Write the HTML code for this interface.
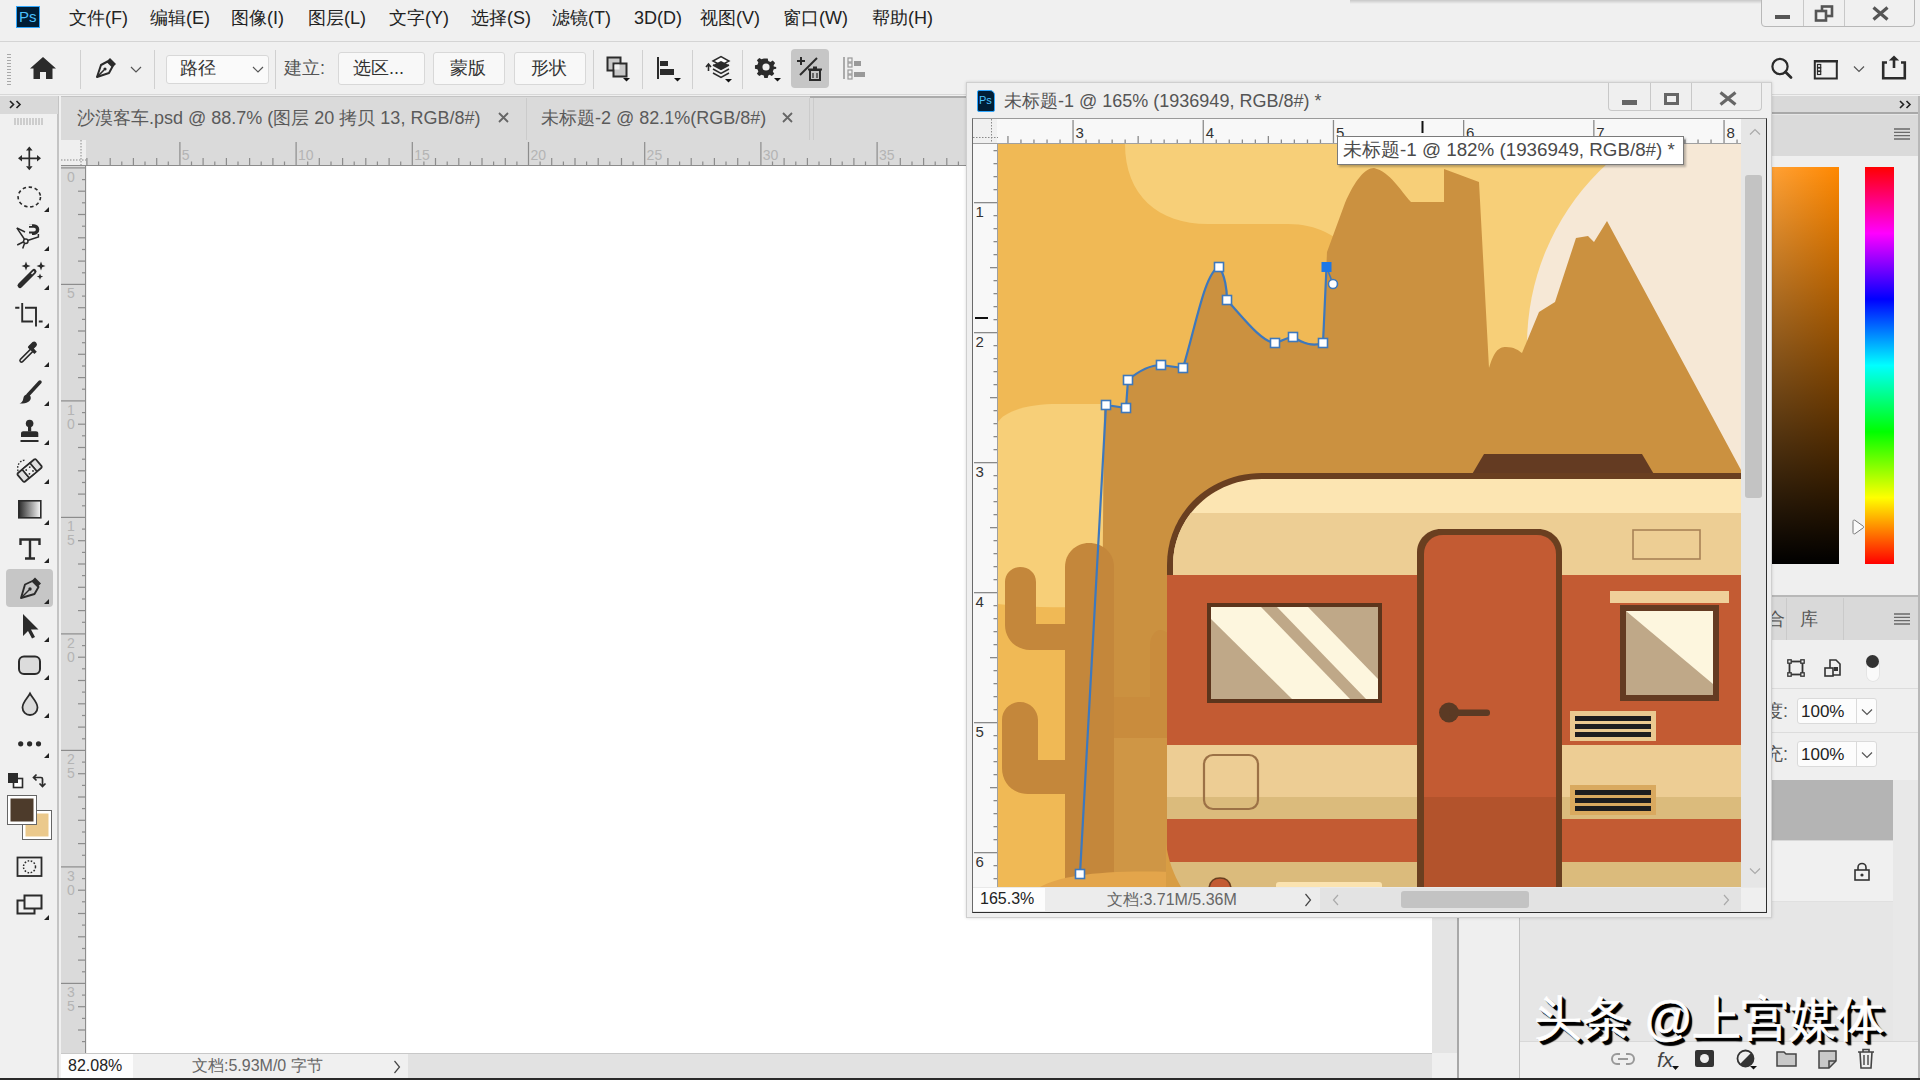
<!DOCTYPE html>
<html><head><meta charset="utf-8">
<style>
*{box-sizing:border-box;margin:0;padding:0}
html,body{width:1920px;height:1080px;overflow:hidden;background:#f0f0f0;font-family:"Liberation Sans",sans-serif;color:#222}
.a{position:absolute}
.t{position:absolute;white-space:nowrap;line-height:1}
svg{position:absolute;overflow:visible}
</style></head><body>
<!-- MENU BAR -->
<div class="a" style="left:0;top:0;width:1920px;height:42px;background:#f0f0f0;border-bottom:1px solid #d4d4d4"></div>
<div class="a" style="left:16px;top:6px;width:24px;height:22px;background:#001e36;border:1px solid #31a8ff"></div>
<div class="t" style="left:19px;top:9px;font-size:15px;color:#4cc2ff">Ps</div>
<div id="menu" class="t" style="left:69px;top:9px;font-size:18px;color:#222">
<span class="t" style="left:0">文件(F)</span><span class="t" style="left:81px">编辑(E)</span><span class="t" style="left:162px">图像(I)</span><span class="t" style="left:239px">图层(L)</span><span class="t" style="left:320px">文字(Y)</span><span class="t" style="left:402px">选择(S)</span><span class="t" style="left:483px">滤镜(T)</span><span class="t" style="left:565px">3D(D)</span><span class="t" style="left:631px">视图(V)</span><span class="t" style="left:714px">窗口(W)</span><span class="t" style="left:803px">帮助(H)</span>
</div>
<div class="a" style="left:1350px;top:0;width:412px;height:4px;background:linear-gradient(#c8c8c8,#f0f0f0)"></div>
<!-- window controls -->
<div class="a" style="left:1761px;top:-2px;width:154px;height:29px;border:1px solid #b8b8b8;border-radius:0 0 4px 4px;background:#f0f0f0"></div>
<div class="a" style="left:1803px;top:0;width:1px;height:26px;background:#c8c8c8"></div>
<div class="a" style="left:1844px;top:0;width:1px;height:26px;background:#c8c8c8"></div>
<div class="a" style="left:1775px;top:15px;width:15px;height:4px;background:#555"></div>
<svg style="left:1814px;top:5px" width="20" height="17"><rect x="8" y="1.5" width="10" height="9.5" fill="none" stroke="#555" stroke-width="2.6"/><rect x="2" y="6" width="10" height="9.5" fill="#f0f0f0" stroke="#555" stroke-width="2.6"/></svg>
<svg style="left:1872px;top:6px" width="18" height="16"><path d="M1.5 1.5l14 12M15.5 1.5l-14 12" stroke="#555" stroke-width="3.2"/></svg>

<!-- OPTIONS BAR -->
<div class="a" style="left:0;top:42px;width:1920px;height:53px;background:#f0f0f0;border-bottom:1px solid #d8d8d8"></div>

<!-- grip -->
<svg style="left:7px;top:54px" width="5" height="31"><path d="M0 .5h4M0 3.5h4M0 6.5h4M0 9.5h4M0 12.5h4M0 15.5h4M0 18.5h4M0 21.5h4M0 24.5h4M0 27.5h4M0 30.5h4" stroke="#a8a8a8" stroke-width="1"/></svg>
<!-- home -->
<svg style="left:30px;top:57px" width="26" height="23"><path d="M13 0L0 11.5h3.5V22h6.5v-7h6v7h6.5V11.5H26z" fill="#2b2b2b"/></svg>
<div class="a" style="left:80px;top:50px;width:1px;height:39px;background:#d0d0d0"></div>
<!-- pen -->
<svg style="left:94px;top:56px" width="24" height="24"><path d="M16 2l6 6-3 3-6-6z" fill="#2b2b2b"/><path d="M13.5 5.5L18.5 10.5 15 17 3 21 7 9z" fill="none" stroke="#2b2b2b" stroke-width="2" stroke-linejoin="round"/><path d="M3 21L10 14" stroke="#2b2b2b" stroke-width="1.6"/><circle cx="11" cy="13" r="1.6" fill="#2b2b2b"/></svg>
<svg style="left:130px;top:66px" width="12" height="8"><path d="M1 1l5 5 5-5" fill="none" stroke="#555" stroke-width="1.2"/></svg>
<div class="a" style="left:154px;top:50px;width:1px;height:39px;background:#d0d0d0"></div>
<!-- dropdown 路径 -->
<div class="a" style="left:166px;top:55px;width:103px;height:29px;background:#fafafa;border:1px solid #d8d8d8;border-radius:3px"></div>
<div class="t" style="left:180px;top:59px;font-size:18px;color:#333">路径</div>
<svg style="left:252px;top:66px" width="12" height="8"><path d="M1 1l5 5 5-5" fill="none" stroke="#555" stroke-width="1.2"/></svg>
<div class="a" style="left:275px;top:50px;width:1px;height:39px;background:#d0d0d0"></div>
<div class="t" style="left:284px;top:59px;font-size:18px;color:#555">建立:</div>
<div class="a" style="left:338px;top:52px;width:87px;height:33px;background:#f8f8f8;border:1px solid #d8d8d8;border-radius:3px"></div>
<div class="t" style="left:353px;top:59px;font-size:18px;color:#333">选区...</div>
<div class="a" style="left:433px;top:52px;width:72px;height:33px;background:#f8f8f8;border:1px solid #d8d8d8;border-radius:3px"></div>
<div class="t" style="left:450px;top:59px;font-size:18px;color:#333">蒙版</div>
<div class="a" style="left:514px;top:52px;width:72px;height:33px;background:#f8f8f8;border:1px solid #d8d8d8;border-radius:3px"></div>
<div class="t" style="left:531px;top:59px;font-size:18px;color:#333">形状</div>
<div class="a" style="left:593px;top:50px;width:1px;height:39px;background:#d0d0d0"></div>
<!-- combine icon -->
<svg style="left:606px;top:56px" width="28" height="28"><rect x="1.5" y="1.5" width="13" height="13" fill="#c8c8c8" stroke="#2b2b2b" stroke-width="2"/><rect x="7.5" y="7.5" width="13" height="13" fill="#c8c8c8" stroke="#2b2b2b" stroke-width="2"/><rect x="8.5" y="8.5" width="5" height="5" fill="#f0f0f0"/><path d="M17 22h7l-3.5 3.5z" fill="#111"/></svg>
<div class="a" style="left:642px;top:50px;width:1px;height:39px;background:#d0d0d0"></div>
<svg style="left:657px;top:56px" width="28" height="28"><rect x="0" y="1" width="2" height="22" fill="#2b2b2b"/><rect x="3" y="5" width="8" height="5" fill="#2b2b2b"/><rect x="3" y="13" width="14" height="6" fill="#2b2b2b"/><path d="M17 22h7l-3.5 3.5z" fill="#111"/></svg>
<div class="a" style="left:692px;top:50px;width:1px;height:39px;background:#d0d0d0"></div>
<svg style="left:703px;top:55px" width="30" height="30"><path d="M3 12l2.5-3 2.5 3M5.5 9v7" fill="none" stroke="#2b2b2b" stroke-width="1.6"/><path d="M10 6l8-4.5 8 4.5-8 4.5z" fill="#fff" stroke="#2b2b2b" stroke-width="1.5"/><path d="M10 10l8 4.5 8-4.5" fill="none" stroke="#2b2b2b" stroke-width="1.5"/><path d="M10 10l8-4 8 4-8 4.5z" fill="#2b2b2b"/><path d="M10 14l8 4.5 8-4.5M10 18l8 4.5 8-4.5" fill="none" stroke="#2b2b2b" stroke-width="1.5"/><path d="M22 24h7l-3.5 3.5z" fill="#111"/></svg>
<div class="a" style="left:742px;top:50px;width:1px;height:39px;background:#d0d0d0"></div>
<svg style="left:755px;top:56px" width="30" height="28"><g transform="translate(11,11)"><path d="M-2-10h4l.7 3 2.6 1.1 2.6-1.7 2.8 2.8-1.7 2.6L9.1-.7 12 0v0 2l-2.9.7-1.1 2.6 1.7 2.6-2.8 2.8-2.6-1.7L2.7 10.1 2 13h-4l-.7-2.9-2.6-1.1-2.6 1.7-2.8-2.8 1.7-2.6L-10.1 2.7-13 2v-4l2.9-.7 1.1-2.6-1.7-2.6 2.8-2.8 2.6 1.7 2.6-1.1z" fill="#2b2b2b" transform="scale(.85)"/><circle r="3.6" fill="#f0f0f0"/></g><path d="M19 22h7l-3.5 3.5z" fill="#111"/></svg>
<div class="a" style="left:791px;top:49px;width:38px;height:39px;background:#c6c6c6;border-radius:4px"></div>
<svg style="left:795px;top:55px" width="30" height="28"><path d="M6 2v8M2 6h8" stroke="#2b2b2b" stroke-width="2"/><path d="M22 3L5 20" stroke="#2b2b2b" stroke-width="2"/><rect x="15" y="15" width="10" height="10" fill="none" stroke="#2b2b2b" stroke-width="2"/><path d="M13 14.5h14M18 12.5h4" stroke="#2b2b2b" stroke-width="2"/><path d="M18 18v5M22 18v5" stroke="#2b2b2b" stroke-width="1.2"/></svg>
<svg style="left:843px;top:56px" width="26" height="28"><path d="M1 1v22" stroke="#999" stroke-width="1.6"/><rect x="5" y="2" width="4" height="4" fill="none" stroke="#999" stroke-width="1.2"/><rect x="5" y="7" width="4" height="4" fill="none" stroke="#999" stroke-width="1.2"/><rect x="5" y="14" width="4" height="4" fill="none" stroke="#999" stroke-width="1.2"/><rect x="5" y="19" width="4" height="4" fill="none" stroke="#999" stroke-width="1.2"/><rect x="11" y="5" width="7" height="5" fill="#999"/><rect x="11" y="16" width="11" height="5" fill="#999"/></svg>
<!-- right side icons -->
<svg style="left:1768px;top:55px" width="26" height="26"><circle cx="12" cy="11.5" r="7.6" fill="none" stroke="#2b2b2b" stroke-width="2.2"/><path d="M17.5 17l5.5 5.5" stroke="#2b2b2b" stroke-width="2.8" stroke-linecap="round"/></svg>
<svg style="left:1813px;top:59px" width="26" height="22"><rect x="1.8" y="2" width="22" height="17.5" fill="none" stroke="#2b2b2b" stroke-width="2"/><rect x="1" y="1" width="24" height="2.5" fill="#2b2b2b"/><rect x="4.5" y="5.5" width="3.2" height="3" fill="none" stroke="#2b2b2b" stroke-width="1.2"/><rect x="4.5" y="9" width="3.2" height="3" fill="none" stroke="#2b2b2b" stroke-width="1.2"/><rect x="4.5" y="12.5" width="3.2" height="3" fill="none" stroke="#2b2b2b" stroke-width="1.2"/></svg>
<svg style="left:1853px;top:65px" width="12" height="8"><path d="M1 1.5l5 5 5-5" fill="none" stroke="#555" stroke-width="1.2"/></svg>
<svg style="left:1880px;top:54px" width="28" height="27"><path d="M7 8.5H3.2v15.8h21.6V8.5H21" fill="none" stroke="#2b2b2b" stroke-width="2.6"/><path d="M14 14V5" stroke="#2b2b2b" stroke-width="2.6"/><path d="M14 1.5l5.2 5H8.8z" fill="#2b2b2b"/></svg>

<!-- LEFT TOOLBAR -->
<div class="a" style="left:0;top:96px;width:59px;height:982px;background:#f0f0f0;border-right:2px solid #c4c4c4"></div>
<div class="a" style="left:0;top:96px;width:58px;height:18px;background:#d9d9d9"></div>
<svg style="left:9px;top:100px" width="14" height="9"><path d="M1 1l3.5 3.5L1 8M7.5 1L11 4.5 7.5 8" fill="none" stroke="#222" stroke-width="1.6"/></svg>
<svg style="left:14px;top:118px" width="32" height="8"><path d="M1 0v7M4 0v7M7 0v7M10 0v7M13 0v7M16 0v7M19 0v7M22 0v7M25 0v7M28 0v7" stroke="#aaa" stroke-width="1"/></svg>


<!-- TOOLS -->
<svg style="left:0;top:0" width="60" height="1080">
<g fill="#2b2b2b" stroke="none">
<!-- move -->
<g fill="none" stroke="#2b2b2b" stroke-width="1.7"><path d="M29.3 150v16.5M21 158.3h16.6"/></g>
<g fill="#2b2b2b"><path d="M29.3 146.5l3.3 4h-6.6zM29.3 170.3l3.3-4h-6.6zM18 158.3l4-3.3v6.6zM41 158.3l-4-3.3v6.6z"/></g>
<ellipse cx="29.3" cy="197" rx="11.2" ry="9.9" fill="none" stroke="#2b2b2b" stroke-width="1.6" stroke-dasharray="3.4 2.7"/>
<path d="M49 207v5h-5z" fill="#222"/>
<!-- lasso -->
<g fill="none" stroke="#2b2b2b" stroke-width="1.5">
<path d="M16.8 227.8L25 232M16.8 227.8L25 240"/>
<path d="M17.2 245l7-3.5M27.6 240.5l10.8-3.6v-3M24.5 243.5l-1.8 5"/>
<circle cx="25.8" cy="241.3" r="2.2" fill="#f0f0f0"/>
</g>
<path d="M29 226h5a3.6 3.6 0 0 1 0 7.2h-5" fill="none" stroke="#2b2b2b" stroke-width="3.4"/><path d="M29 224.3h3v1.6h-3zM29 233.4h3v1.6h-3z" fill="#f0f0f0"/>
<path d="M49 246v5h-5z" fill="#222"/>
<!-- wand -->
<path d="M20 285.5l14-14" stroke="#2b2b2b" stroke-width="5" stroke-linecap="round"/>
<path d="M31.5 274l2.5-2.5" stroke="#f0f0f0" stroke-width="1.5"/>
<path d="M26 261.5l1.2 3.3 3.3 1.2-3.3 1.2-1.2 3.3-1.2-3.3-3.3-1.2 3.3-1.2zM41 261.5l1.2 3.3 3.3 1.2-3.3 1.2-1.2 3.3-1.2-3.3-3.3-1.2 3.3-1.2zM40 273.5l.9 2.2 2.2.9-2.2.9-.9 2.2-.9-2.2-2.2-.9 2.2-.9z" fill="#2b2b2b"/>
<path d="M49 285v5h-5z" fill="#222"/>
<!-- crop -->
<path d="M22.2 303v18.5H33M36 326.6V307.8H25M15.2 307.8h4.2M38.8 321.5h3.8" fill="none" stroke="#2b2b2b" stroke-width="1.9"/>
<path d="M49 323v5h-5z" fill="#222"/>
<!-- eyedropper -->
<path d="M21.5 360.5l10.5-10.5" stroke="#2b2b2b" stroke-width="4.6" stroke-linecap="round"/>
<path d="M21.5 360.5l10.5-10.5" stroke="#f0f0f0" stroke-width="1.6" stroke-linecap="round"/>
<path d="M27.8 347.5l6.6 6.6 2.4-2.4-6.6-6.6z" fill="#2b2b2b"/>
<path d="M32 350.5l4.5-4.5a2.9 2.9 0 0 0-4-4L28 346.5z" fill="#2b2b2b"/>
<path d="M49 362v5h-5z" fill="#222"/>
<!-- brush -->
<path d="M28 395l12-13" stroke="#2b2b2b" stroke-width="3.5" stroke-linecap="round"/>
<path d="M19.5 403.5c1.5-.3 3.5-2 3.8-5 .3-2.5 2-4 4-4 2.2 0 3.5 1.5 3.5 3.4-.2 3.5-4 5.8-11.3 5.6z" fill="#2b2b2b"/>
<path d="M49 401v5h-5z" fill="#222"/>
<!-- stamp -->
<circle cx="29.6" cy="423.5" r="3.8" fill="#2b2b2b"/>
<path d="M28 426h3.2v5.5H28z" fill="#2b2b2b"/>
<path d="M21 437v-3.5c0-1.5 1-2.3 2.3-2.3h12.7c1.3 0 2.3.8 2.3 2.3V437z" fill="#2b2b2b"/>
<rect x="20.5" y="440" width="18" height="2" fill="#2b2b2b"/>
<path d="M49 440v5h-5z" fill="#222"/>
<!-- healing -->
<g transform="translate(29.6 470.5) rotate(-40)">
<rect x="-12" y="-5.5" width="24" height="11" rx="1.5" fill="#e0e0e0" stroke="#2b2b2b" stroke-width="1.8"/>
<path d="M-5 -5.5v11M5 -5.5v11" stroke="#2b2b2b" stroke-width="1.5"/>
<rect x="-5" y="-5.5" width="10" height="11" fill="#f0f0f0" stroke="#2b2b2b" stroke-width="1.5"/>
<circle cx="-2.3" cy="-2.5" r=".9" fill="#2b2b2b"/><circle cx="2.3" cy="-2.5" r=".9" fill="#2b2b2b"/><circle cx="-2.3" cy="2.5" r=".9" fill="#2b2b2b"/><circle cx="2.3" cy="2.5" r=".9" fill="#2b2b2b"/>
</g>
<path d="M18 471c-1-4 0-10 7-11" fill="none" stroke="#2b2b2b" stroke-width="1.4" stroke-dasharray="1.6 1.6"/>
<path d="M49 479v5h-5z" fill="#222"/>
<!-- gradient -->
<defs><linearGradient id="gr" x1="0" x2="1" y1="0" y2="0"><stop offset="0" stop-color="#2a2a2a"/><stop offset="1" stop-color="#fafafa"/></linearGradient></defs>
<rect x="18.8" y="500.8" width="22" height="17" fill="url(#gr)" stroke="#2b2b2b" stroke-width="1.6"/>
<path d="M49 520v5h-5z" fill="#222"/>
<!-- type -->
<path d="M20.5 545v-5.5h19v5.5M30 539.5v19M25 558.5h10" fill="none" stroke="#2b2b2b" stroke-width="2.4"/>
<path d="M49 558v5h-5z" fill="#222"/>
</svg>
<div class="a" style="left:6px;top:569px;width:47px;height:38px;background:#c6c6c6;border-radius:4px"></div>
<svg style="left:0;top:0" width="60" height="1080">
<!-- pen -->
<path d="M35 577.5l6 6-3 3-6-6z" fill="#2b2b2b"/>
<path d="M32.5 581L38.5 587 34.5 594 21 598 25 584.5z" fill="none" stroke="#2b2b2b" stroke-width="1.9" stroke-linejoin="round"/>
<path d="M21.5 597.5L29 590" stroke="#2b2b2b" stroke-width="1.5"/>
<circle cx="30" cy="589" r="1.7" fill="#2b2b2b"/>
<path d="M49 599v5h-5z" fill="#222"/>
<!-- path select -->
<path d="M23 614v22l5-5 4 7.5 3-1.5-4-7.5h7.5z" fill="#2b2b2b"/>
<path d="M49 637v5h-5z" fill="#222"/>
<!-- rounded rect -->
<rect x="19" y="656.5" width="21" height="17.5" rx="5" fill="#dcdcdc" stroke="#2b2b2b" stroke-width="2"/>
<path d="M49 675v5h-5z" fill="#222"/>
<!-- drop -->
<path d="M30 693.5c-2 4-7.5 8.5-7.5 14a7.5 7.5 0 0 0 15 0c0-5.5-5.5-10-7.5-14z" fill="#dcdcdc" stroke="#2b2b2b" stroke-width="1.8"/>
<path d="M49 713v5h-5z" fill="#222"/>
<!-- dots -->
<circle cx="20.7" cy="743.8" r="2.6" fill="#2b2b2b"/><circle cx="29.6" cy="743.8" r="2.6" fill="#2b2b2b"/><circle cx="38.5" cy="743.8" r="2.6" fill="#2b2b2b"/>
<path d="M49 753v5h-5z" fill="#222"/>
<!-- default colors -->
<rect x="13.5" y="778.5" width="9" height="9" fill="#fff" stroke="#2b2b2b" stroke-width="1.6"/>
<rect x="8" y="773" width="10" height="10" fill="#2b2b2b"/>
<path d="M36.5 774.5l-3 3 3 3M34 777.5h7c1 0 1.5.5 1.5 1.5V786M39.5 783.5l3 3 3-3" fill="none" stroke="#2b2b2b" stroke-width="1.7"/>
<!-- bg / fg swatches -->
<rect x="22.5" y="810.5" width="29" height="29" fill="#fff" stroke="#666" stroke-width="1"/>
<rect x="25.5" y="813.5" width="23" height="23" fill="#ebc98c"/>
<rect x="7.5" y="795.5" width="29" height="29" fill="#fff" stroke="#666" stroke-width="1"/>
<rect x="10.5" y="798.5" width="23" height="23" fill="#4d3b2b"/>
<!-- quick mask -->
<rect x="17.5" y="857.5" width="24" height="18.5" fill="none" stroke="#2b2b2b" stroke-width="1.8"/>
<circle cx="29.5" cy="866.8" r="6" fill="none" stroke="#2b2b2b" stroke-width="1.5" stroke-dasharray="1.6 1.6"/>
<!-- screen mode -->
<rect x="24.5" y="895.5" width="17" height="13" fill="none" stroke="#2b2b2b" stroke-width="2"/>
<path d="M24 900.5h-6.5v13h17v-4.5" fill="none" stroke="#2b2b2b" stroke-width="2"/>
<path d="M24.5 900.5v8h10" fill="none" stroke="#2b2b2b" stroke-width="1"/>
<path d="M49 915v5h-5z" fill="#222"/>
</svg>
<!-- DOC TABS -->
<div class="a" style="left:61px;top:96px;width:1400px;height:44px;background:#dadada;border-top:1px solid #c4c4c4"></div>
<div class="t" style="left:77px;top:109px;font-size:18px;color:#5a5a5a">沙漠客车.psd @ 88.7% (图层 20 拷贝 13, RGB/8#)</div>
<svg style="left:498px;top:112px" width="11" height="11"><path d="M1 1l9 9M10 1L1 10" stroke="#666" stroke-width="1.8"/></svg>
<div class="a" style="left:526px;top:98px;width:1px;height:42px;background:#cbcbcb"></div>
<div class="t" style="left:541px;top:109px;font-size:18px;color:#5a5a5a">未标题-2 @ 82.1%(RGB/8#)</div>
<svg style="left:782px;top:112px" width="11" height="11"><path d="M1 1l9 9M10 1L1 10" stroke="#666" stroke-width="1.8"/></svg>
<div class="a" style="left:809px;top:98px;width:1px;height:42px;background:#cbcbcb"></div>
<div class="a" style="left:813px;top:98px;width:1px;height:42px;background:#cbcbcb"></div>
<div class="a" style="left:810px;top:96px;width:660px;height:2px;background:#ababab"></div>

<!-- RULERS main -->
<div class="a" style="left:61px;top:140px;width:1400px;height:26px;background:#dadada;border-bottom:1px solid #8c8c8c"></div>
<svg style="left:64px;top:140px" width="1000" height="26"><g fill="#8c8c8c"><rect x="22.3" y="18" width="1.2" height="7"/><rect x="34.0" y="21.5" width="1.2" height="3.5"/><rect x="45.6" y="18" width="1.2" height="7"/><rect x="57.2" y="21.5" width="1.2" height="3.5"/><rect x="68.8" y="18" width="1.2" height="7"/><rect x="80.4" y="21.5" width="1.2" height="3.5"/><rect x="92.1" y="18" width="1.2" height="7"/><rect x="103.7" y="21.5" width="1.2" height="3.5"/><rect x="115.3" y="2" width="1.2" height="23"/><rect x="126.9" y="21.5" width="1.2" height="3.5"/><rect x="138.5" y="18" width="1.2" height="7"/><rect x="150.2" y="21.5" width="1.2" height="3.5"/><rect x="161.8" y="18" width="1.2" height="7"/><rect x="173.4" y="21.5" width="1.2" height="3.5"/><rect x="185.0" y="18" width="1.2" height="7"/><rect x="196.6" y="21.5" width="1.2" height="3.5"/><rect x="208.3" y="18" width="1.2" height="7"/><rect x="219.9" y="21.5" width="1.2" height="3.5"/><rect x="231.5" y="2" width="1.2" height="23"/><rect x="243.1" y="21.5" width="1.2" height="3.5"/><rect x="254.7" y="18" width="1.2" height="7"/><rect x="266.4" y="21.5" width="1.2" height="3.5"/><rect x="278.0" y="18" width="1.2" height="7"/><rect x="289.6" y="21.5" width="1.2" height="3.5"/><rect x="301.2" y="18" width="1.2" height="7"/><rect x="312.8" y="21.5" width="1.2" height="3.5"/><rect x="324.5" y="18" width="1.2" height="7"/><rect x="336.1" y="21.5" width="1.2" height="3.5"/><rect x="347.7" y="2" width="1.2" height="23"/><rect x="359.3" y="21.5" width="1.2" height="3.5"/><rect x="370.9" y="18" width="1.2" height="7"/><rect x="382.6" y="21.5" width="1.2" height="3.5"/><rect x="394.2" y="18" width="1.2" height="7"/><rect x="405.8" y="21.5" width="1.2" height="3.5"/><rect x="417.4" y="18" width="1.2" height="7"/><rect x="429.0" y="21.5" width="1.2" height="3.5"/><rect x="440.7" y="18" width="1.2" height="7"/><rect x="452.3" y="21.5" width="1.2" height="3.5"/><rect x="463.9" y="2" width="1.2" height="23"/><rect x="475.5" y="21.5" width="1.2" height="3.5"/><rect x="487.1" y="18" width="1.2" height="7"/><rect x="498.8" y="21.5" width="1.2" height="3.5"/><rect x="510.4" y="18" width="1.2" height="7"/><rect x="522.0" y="21.5" width="1.2" height="3.5"/><rect x="533.6" y="18" width="1.2" height="7"/><rect x="545.2" y="21.5" width="1.2" height="3.5"/><rect x="556.9" y="18" width="1.2" height="7"/><rect x="568.5" y="21.5" width="1.2" height="3.5"/><rect x="580.1" y="2" width="1.2" height="23"/><rect x="591.7" y="21.5" width="1.2" height="3.5"/><rect x="603.3" y="18" width="1.2" height="7"/><rect x="615.0" y="21.5" width="1.2" height="3.5"/><rect x="626.6" y="18" width="1.2" height="7"/><rect x="638.2" y="21.5" width="1.2" height="3.5"/><rect x="649.8" y="18" width="1.2" height="7"/><rect x="661.4" y="21.5" width="1.2" height="3.5"/><rect x="673.1" y="18" width="1.2" height="7"/><rect x="684.7" y="21.5" width="1.2" height="3.5"/><rect x="696.3" y="2" width="1.2" height="23"/><rect x="707.9" y="21.5" width="1.2" height="3.5"/><rect x="719.5" y="18" width="1.2" height="7"/><rect x="731.2" y="21.5" width="1.2" height="3.5"/><rect x="742.8" y="18" width="1.2" height="7"/><rect x="754.4" y="21.5" width="1.2" height="3.5"/><rect x="766.0" y="18" width="1.2" height="7"/><rect x="777.6" y="21.5" width="1.2" height="3.5"/><rect x="789.3" y="18" width="1.2" height="7"/><rect x="800.9" y="21.5" width="1.2" height="3.5"/><rect x="812.5" y="2" width="1.2" height="23"/><rect x="824.1" y="21.5" width="1.2" height="3.5"/><rect x="835.7" y="18" width="1.2" height="7"/><rect x="847.4" y="21.5" width="1.2" height="3.5"/><rect x="859.0" y="18" width="1.2" height="7"/><rect x="870.6" y="21.5" width="1.2" height="3.5"/><rect x="882.2" y="18" width="1.2" height="7"/><rect x="893.8" y="21.5" width="1.2" height="3.5"/><rect x="905.5" y="18" width="1.2" height="7"/><rect x="917.1" y="21.5" width="1.2" height="3.5"/><rect x="928.7" y="2" width="1.2" height="23"/></g><g fill="#b4b4b4" font-family="Liberation Sans" font-size="14"><text x="117.8" y="20">5</text><text x="234.0" y="20">10</text><text x="350.2" y="20">15</text><text x="466.4" y="20">20</text><text x="582.6" y="20">25</text><text x="698.8" y="20">30</text><text x="815.0" y="20">35</text><text x="931.2" y="20">40</text></g></svg>
<div class="a" style="left:61px;top:140px;width:25px;height:25px;background:#efefef"></div>
<svg style="left:61px;top:140px" width="25" height="26"><path d="M20 0v26M0 20h25" stroke="#888" stroke-width="1" stroke-dasharray="1.5 1.5"/></svg>
<div class="a" style="left:61px;top:166px;width:25px;height:888px;background:#dadada;border-right:1px solid #8c8c8c"></div>
<svg style="left:61px;top:140px" width="26" height="914"><g fill="#8c8c8c"><rect x="0" y="27.3" width="25" height="1.2"/><rect x="21" y="39.0" width="4" height="1.2"/><rect x="17" y="50.6" width="8" height="1.2"/><rect x="21" y="62.2" width="4" height="1.2"/><rect x="17" y="73.9" width="8" height="1.2"/><rect x="21" y="85.6" width="4" height="1.2"/><rect x="17" y="97.2" width="8" height="1.2"/><rect x="21" y="108.9" width="4" height="1.2"/><rect x="17" y="120.5" width="8" height="1.2"/><rect x="21" y="132.2" width="4" height="1.2"/><rect x="0" y="143.8" width="25" height="1.2"/><rect x="21" y="155.5" width="4" height="1.2"/><rect x="17" y="167.1" width="8" height="1.2"/><rect x="21" y="178.8" width="4" height="1.2"/><rect x="17" y="190.4" width="8" height="1.2"/><rect x="21" y="202.1" width="4" height="1.2"/><rect x="17" y="213.7" width="8" height="1.2"/><rect x="21" y="225.4" width="4" height="1.2"/><rect x="17" y="237.0" width="8" height="1.2"/><rect x="21" y="248.6" width="4" height="1.2"/><rect x="0" y="260.3" width="25" height="1.2"/><rect x="21" y="272.0" width="4" height="1.2"/><rect x="17" y="283.6" width="8" height="1.2"/><rect x="21" y="295.2" width="4" height="1.2"/><rect x="17" y="306.9" width="8" height="1.2"/><rect x="21" y="318.6" width="4" height="1.2"/><rect x="17" y="330.2" width="8" height="1.2"/><rect x="21" y="341.9" width="4" height="1.2"/><rect x="17" y="353.5" width="8" height="1.2"/><rect x="21" y="365.2" width="4" height="1.2"/><rect x="0" y="376.8" width="25" height="1.2"/><rect x="21" y="388.5" width="4" height="1.2"/><rect x="17" y="400.1" width="8" height="1.2"/><rect x="21" y="411.8" width="4" height="1.2"/><rect x="17" y="423.4" width="8" height="1.2"/><rect x="21" y="435.0" width="4" height="1.2"/><rect x="17" y="446.7" width="8" height="1.2"/><rect x="21" y="458.4" width="4" height="1.2"/><rect x="17" y="470.0" width="8" height="1.2"/><rect x="21" y="481.7" width="4" height="1.2"/><rect x="0" y="493.3" width="25" height="1.2"/><rect x="21" y="505.0" width="4" height="1.2"/><rect x="17" y="516.6" width="8" height="1.2"/><rect x="21" y="528.2" width="4" height="1.2"/><rect x="17" y="539.9" width="8" height="1.2"/><rect x="21" y="551.5" width="4" height="1.2"/><rect x="17" y="563.2" width="8" height="1.2"/><rect x="21" y="574.9" width="4" height="1.2"/><rect x="17" y="586.5" width="8" height="1.2"/><rect x="21" y="598.2" width="4" height="1.2"/><rect x="0" y="609.8" width="25" height="1.2"/><rect x="21" y="621.5" width="4" height="1.2"/><rect x="17" y="633.1" width="8" height="1.2"/><rect x="21" y="644.8" width="4" height="1.2"/><rect x="17" y="656.4" width="8" height="1.2"/><rect x="21" y="668.0" width="4" height="1.2"/><rect x="17" y="679.7" width="8" height="1.2"/><rect x="21" y="691.4" width="4" height="1.2"/><rect x="17" y="703.0" width="8" height="1.2"/><rect x="21" y="714.7" width="4" height="1.2"/><rect x="0" y="726.3" width="25" height="1.2"/><rect x="21" y="738.0" width="4" height="1.2"/><rect x="17" y="749.6" width="8" height="1.2"/><rect x="21" y="761.2" width="4" height="1.2"/><rect x="17" y="772.9" width="8" height="1.2"/><rect x="21" y="784.5" width="4" height="1.2"/><rect x="17" y="796.2" width="8" height="1.2"/><rect x="21" y="807.9" width="4" height="1.2"/><rect x="17" y="819.5" width="8" height="1.2"/><rect x="21" y="831.2" width="4" height="1.2"/><rect x="0" y="842.8" width="25" height="1.2"/><rect x="21" y="854.5" width="4" height="1.2"/><rect x="17" y="866.1" width="8" height="1.2"/><rect x="21" y="877.8" width="4" height="1.2"/><rect x="17" y="889.4" width="8" height="1.2"/><rect x="21" y="901.0" width="4" height="1.2"/></g><g fill="#b4b4b4" font-family="Liberation Sans" font-size="14"><text x="6" y="41.8">0</text><text x="6" y="158.3">5</text><text x="6" y="274.8">1</text><text x="6" y="288.8">0</text><text x="6" y="391.3">1</text><text x="6" y="405.3">5</text><text x="6" y="507.8">2</text><text x="6" y="521.8">0</text><text x="6" y="624.3">2</text><text x="6" y="638.3">5</text><text x="6" y="740.8">3</text><text x="6" y="754.8">0</text><text x="6" y="857.3">3</text><text x="6" y="871.3">5</text></g></svg>

<!-- CANVAS -->
<div class="a" style="left:87px;top:166px;width:1345px;height:887px;background:#ffffff"></div>
<div class="a" style="left:1432px;top:166px;width:25px;height:912px;background:#e4e4e4"></div>
<div class="a" style="left:1457px;top:96px;width:2px;height:982px;background:#a8a8a8"></div>
<div class="a" style="left:1459px;top:96px;width:60px;height:982px;background:#efefef"></div>
<div class="a" style="left:1519px;top:96px;width:1px;height:982px;background:#c0c0c0"></div>

<!-- STATUS BAR main -->
<div class="a" style="left:1432px;top:1053px;width:25px;height:25px;background:#efefef"></div>
<div class="a" style="left:61px;top:1053px;width:1371px;height:25px;background:#e2e2e2;border-top:1px solid #c8c8c8"></div>
<div class="a" style="left:61px;top:1054px;width:347px;height:24px;background:#f0f0f0"></div>
<div class="a" style="left:61px;top:1054px;width:72px;height:24px;background:#fdfdfd"></div>
<div class="t" style="left:68px;top:1058px;font-size:16px;color:#222">82.08%</div>
<div class="t" style="left:192px;top:1058px;font-size:16px;color:#666">文档:5.93M/0 字节</div>
<svg style="left:393px;top:1060px" width="8" height="14"><path d="M1.5 1l5 6-5 6" fill="none" stroke="#444" stroke-width="1.2"/></svg>
<div class="a" style="left:0;top:1078px;width:1920px;height:2px;background:#2a2a2a"></div>


<!-- RIGHT DOCK -->
<div class="a" style="left:1520px;top:96px;width:400px;height:982px;background:#e6e6e6"></div>
<div class="a" style="left:1520px;top:96px;width:398px;height:17px;background:#d9d9d9"></div>
<div class="a" style="left:1520px;top:112px;width:398px;height:2px;background:#a8a8a8"></div>
<svg style="left:1899px;top:100px" width="14" height="9"><path d="M1 1l3.5 3.5L1 8M7.5 1L11 4.5 7.5 8" fill="none" stroke="#222" stroke-width="1.6"/></svg>
<!-- color panel -->
<div class="a" style="left:1520px;top:115px;width:398px;height:41px;background:#dadada"></div>
<svg style="left:1894px;top:128px" width="16" height="12"><path d="M0 1h16M0 4.3h16M0 7.6h16M0 11h16" stroke="#6a6a6a" stroke-width="1.3"/></svg>
<div class="a" style="left:1520px;top:156px;width:398px;height:439px;background:#efefef"></div>
<div class="a" style="left:1520px;top:167px;width:319px;height:397px;background:linear-gradient(to bottom,rgba(0,0,0,0),#000),linear-gradient(to right,#fff,#ff8800)"></div>
<div class="a" style="left:1865px;top:167px;width:29px;height:397px;background:linear-gradient(to bottom,#ff0000 0%,#ff00ff 16.7%,#0000ff 33.3%,#00ffff 50%,#00ff00 66.7%,#ffff00 83.3%,#ff0000 100%)"></div>
<svg style="left:1851px;top:519px" width="14" height="16"><path d="M2 2.5C2 1 3 .8 4 1.3L12 7c1 .6 1 1.4 0 2L4 14.7C3 15.2 2 15 2 13.5z" fill="#fafafa" stroke="#777" stroke-width="1"/></svg>
<div class="a" style="left:1520px;top:595px;width:398px;height:2px;background:#b8b8b8"></div>
<!-- layers tabs -->
<div class="a" style="left:1520px;top:597px;width:398px;height:43px;background:#d9d9d9"></div>
<div class="t" style="left:1749px;top:610px;font-size:18px;color:#555">组合</div>
<div class="a" style="left:1786px;top:598px;width:1px;height:42px;background:#cacaca"></div>
<div class="t" style="left:1800px;top:610px;font-size:18px;color:#555">库</div>
<div class="a" style="left:1843px;top:598px;width:1px;height:42px;background:#cacaca"></div>
<svg style="left:1894px;top:613px" width="16" height="12"><path d="M0 1h16M0 4.3h16M0 7.6h16M0 11h16" stroke="#6a6a6a" stroke-width="1.3"/></svg>
<div class="a" style="left:1520px;top:640px;width:398px;height:140px;background:#efefef"></div>
<svg style="left:1787px;top:659px" width="18" height="18"><rect x="2.5" y="2.5" width="13" height="13" fill="none" stroke="#333" stroke-width="1.8"/><g fill="#efefef" stroke="#333" stroke-width="1.3"><rect x="0.8" y="0.8" width="3.4" height="3.4"/><rect x="13.8" y="0.8" width="3.4" height="3.4"/><rect x="0.8" y="13.8" width="3.4" height="3.4"/><rect x="13.8" y="13.8" width="3.4" height="3.4"/></g></svg>
<svg style="left:1824px;top:659px" width="18" height="18"><path d="M6 1h6l4 4v11H6z" fill="none" stroke="#333" stroke-width="1.6"/><rect x="1" y="9" width="8" height="8" fill="#efefef" stroke="#333" stroke-width="1.6"/><rect x="10" y="8" width="4" height="4" fill="#333"/></svg>
<div class="a" style="left:1866px;top:655px;width:14px;height:27px;background:#fafafa;border-radius:7px;box-shadow:inset 0 0 0 1px #e4e4e4"></div>
<div class="a" style="left:1866px;top:655px;width:13px;height:13px;background:#333;border-radius:50%"></div>
<div class="a" style="left:1520px;top:688px;width:398px;height:1px;background:#dcdcdc"></div>
<div class="t" style="left:1765px;top:702px;font-size:18px;color:#555">度:</div>
<div class="a" style="left:1797px;top:698px;width:80px;height:26px;background:#fcfcfc;border:1px solid #dadada;border-radius:3px"></div>
<div class="a" style="left:1856px;top:698px;width:1px;height:26px;background:#dadada"></div>
<div class="t" style="left:1801px;top:703px;font-size:17px;color:#222">100%</div>
<svg style="left:1861px;top:708px" width="12" height="8"><path d="M1 1.5l5 5 5-5" fill="none" stroke="#555" stroke-width="1.2"/></svg>
<div class="a" style="left:1520px;top:732px;width:398px;height:1px;background:#dcdcdc"></div>
<div class="t" style="left:1765px;top:745px;font-size:18px;color:#555">充:</div>
<div class="a" style="left:1797px;top:741px;width:80px;height:26px;background:#fcfcfc;border:1px solid #dadada;border-radius:3px"></div>
<div class="a" style="left:1856px;top:741px;width:1px;height:26px;background:#dadada"></div>
<div class="t" style="left:1801px;top:746px;font-size:17px;color:#222">100%</div>
<svg style="left:1861px;top:751px" width="12" height="8"><path d="M1 1.5l5 5 5-5" fill="none" stroke="#555" stroke-width="1.2"/></svg>
<div class="a" style="left:1520px;top:780px;width:373px;height:60px;background:#b4b4b4"></div>
<div class="a" style="left:1520px;top:840px;width:373px;height:62px;background:#f0f0f0;border-top:1px solid #d8d8d8;border-bottom:1px solid #e0e0e0"></div>
<svg style="left:1854px;top:862px" width="16" height="19"><path d="M4 8V5.5a4 4 0 0 1 8 0V8" fill="none" stroke="#333" stroke-width="1.6"/><rect x="1" y="8" width="14" height="10" fill="none" stroke="#333" stroke-width="1.6"/><circle cx="8" cy="13" r="1.6" fill="#333"/></svg>
<div class="a" style="left:1893px;top:780px;width:25px;height:262px;background:#e8e8e8"></div>
<div class="a" style="left:1918px;top:96px;width:2px;height:982px;background:#b8b8b8"></div>
<!-- layers bottom bar -->
<div class="a" style="left:1520px;top:1041px;width:398px;height:37px;background:#efefef;border-top:1px solid #d8d8d8"></div>
<svg style="left:1612px;top:1052px" width="22" height="14"><path d="M8 2H5a5 5 0 0 0 0 10h3M14 2h3a5 5 0 0 1 0 10h-3M6 7h10" fill="none" stroke="#999" stroke-width="2"/></svg>
<div class="t" style="left:1657px;top:1049px;font-size:21px;font-style:italic;color:#444">fx</div>
<svg style="left:1672px;top:1066px" width="8" height="5"><path d="M0 0h7L3.5 4z" fill="#111"/></svg>
<svg style="left:1695px;top:1050px" width="20" height="18"><rect x="0" y="0" width="19" height="17" rx="2" fill="#333"/><circle cx="9.5" cy="8.5" r="4.5" fill="#efefef"/></svg>
<svg style="left:1736px;top:1049px" width="22" height="22"><circle cx="9.5" cy="9.5" r="8" fill="none" stroke="#333" stroke-width="1.8"/><path d="M15.2 3.8A8 8 0 0 1 3.8 15.2z" fill="#333"/><path d="M14 17h7l-3.5 3.5z" fill="#111"/></svg>
<svg style="left:1776px;top:1050px" width="21" height="17"><path d="M1 2h7l2 2h10v12H1z" fill="#c8c8c8" stroke="#444" stroke-width="1.5"/></svg>
<svg style="left:1818px;top:1050px" width="19" height="19"><path d="M1 1h17v10l-7 7H1z" fill="#c8c8c8" stroke="#444" stroke-width="1.5"/><path d="M11 18v-7h7" fill="none" stroke="#444" stroke-width="1.5"/></svg>
<svg style="left:1857px;top:1048px" width="18" height="21"><path d="M1 4h16M6 4V1.5h6V4M3 4l1 16h10l1-16" fill="none" stroke="#444" stroke-width="1.6"/><path d="M7 7v10M11 7v10" stroke="#444" stroke-width="1.4"/></svg>
<!-- FLOAT WINDOW -->
<div class="a" style="left:966px;top:82px;width:806px;height:836px;background:#efefef;border:1px solid #cfcfcf;box-shadow:0 0 3px rgba(0,0,0,.15)"></div>
<div class="a" style="left:977px;top:90px;width:18px;height:22px;background:#001e36;border:1px solid #31a8ff;border-radius:2px 5px 2px 2px"></div>
<div class="t" style="left:979px;top:95px;font-size:11px;color:#4cc2ff">Ps</div>
<div class="t" style="left:1004px;top:92px;font-size:18px;color:#555">未标题-1 @ 165% (1936949, RGB/8#) *</div>
<div class="a" style="left:1608px;top:83px;width:154px;height:28px;border:1px solid #c8c8c8;border-top:none;border-radius:0 0 4px 4px"></div>
<div class="a" style="left:1650px;top:83px;width:1px;height:27px;background:#c8c8c8"></div>
<div class="a" style="left:1691px;top:83px;width:1px;height:27px;background:#c8c8c8"></div>
<div class="a" style="left:1622px;top:100px;width:15px;height:5px;background:#666"></div>
<div class="a" style="left:1664px;top:93px;width:15px;height:12px;border:3px solid #666"></div>
<svg style="left:1719px;top:91px" width="18" height="15"><path d="M1.5 1.5l15 12M16.5 1.5l-15 12" stroke="#666" stroke-width="3.2"/></svg>

<div class="a" style="left:972px;top:118px;width:795px;height:795px;background:#f8f8f8;border:1.5px solid #2e2e2e;border-top-color:#9a9a9a;border-left-color:#6a6a6a"></div>
<div class="a" style="left:973px;top:119px;width:24px;height:24px;background:#f0f0f0"></div>
<svg style="left:973px;top:119px" width="25" height="25"><path d="M18.5 0v25M0 18.5h25" stroke="#888" stroke-width="1" stroke-dasharray="1.5 1.5"/></svg>
<svg style="left:997px;top:119px" width="744" height="25"><g fill="#8a8a8a"><rect x="10.3" y="17" width="1.3" height="8"/><rect x="23.3" y="20.5" width="1.3" height="4.5"/><rect x="36.3" y="20.5" width="1.3" height="4.5"/><rect x="49.4" y="20.5" width="1.3" height="4.5"/><rect x="62.4" y="20.5" width="1.3" height="4.5"/><rect x="75.4" y="1" width="1.3" height="24"/><rect x="88.4" y="20.5" width="1.3" height="4.5"/><rect x="101.4" y="20.5" width="1.3" height="4.5"/><rect x="114.5" y="20.5" width="1.3" height="4.5"/><rect x="127.5" y="20.5" width="1.3" height="4.5"/><rect x="140.5" y="17" width="1.3" height="8"/><rect x="153.5" y="20.5" width="1.3" height="4.5"/><rect x="166.5" y="20.5" width="1.3" height="4.5"/><rect x="179.6" y="20.5" width="1.3" height="4.5"/><rect x="192.6" y="20.5" width="1.3" height="4.5"/><rect x="205.6" y="1" width="1.3" height="24"/><rect x="218.6" y="20.5" width="1.3" height="4.5"/><rect x="231.6" y="20.5" width="1.3" height="4.5"/><rect x="244.7" y="20.5" width="1.3" height="4.5"/><rect x="257.7" y="20.5" width="1.3" height="4.5"/><rect x="270.7" y="17" width="1.3" height="8"/><rect x="283.7" y="20.5" width="1.3" height="4.5"/><rect x="296.7" y="20.5" width="1.3" height="4.5"/><rect x="309.8" y="20.5" width="1.3" height="4.5"/><rect x="322.8" y="20.5" width="1.3" height="4.5"/><rect x="335.8" y="1" width="1.3" height="24"/><rect x="348.8" y="20.5" width="1.3" height="4.5"/><rect x="361.8" y="20.5" width="1.3" height="4.5"/><rect x="374.9" y="20.5" width="1.3" height="4.5"/><rect x="387.9" y="20.5" width="1.3" height="4.5"/><rect x="400.9" y="17" width="1.3" height="8"/><rect x="413.9" y="20.5" width="1.3" height="4.5"/><rect x="426.9" y="20.5" width="1.3" height="4.5"/><rect x="440.0" y="20.5" width="1.3" height="4.5"/><rect x="453.0" y="20.5" width="1.3" height="4.5"/><rect x="466.0" y="1" width="1.3" height="24"/><rect x="479.0" y="20.5" width="1.3" height="4.5"/><rect x="492.0" y="20.5" width="1.3" height="4.5"/><rect x="505.1" y="20.5" width="1.3" height="4.5"/><rect x="518.1" y="20.5" width="1.3" height="4.5"/><rect x="531.1" y="17" width="1.3" height="8"/><rect x="544.1" y="20.5" width="1.3" height="4.5"/><rect x="557.1" y="20.5" width="1.3" height="4.5"/><rect x="570.2" y="20.5" width="1.3" height="4.5"/><rect x="583.2" y="20.5" width="1.3" height="4.5"/><rect x="596.2" y="1" width="1.3" height="24"/><rect x="609.2" y="20.5" width="1.3" height="4.5"/><rect x="622.2" y="20.5" width="1.3" height="4.5"/><rect x="635.3" y="20.5" width="1.3" height="4.5"/><rect x="648.3" y="20.5" width="1.3" height="4.5"/><rect x="661.3" y="17" width="1.3" height="8"/><rect x="674.3" y="20.5" width="1.3" height="4.5"/><rect x="687.3" y="20.5" width="1.3" height="4.5"/><rect x="700.4" y="20.5" width="1.3" height="4.5"/><rect x="713.4" y="20.5" width="1.3" height="4.5"/><rect x="726.4" y="1" width="1.3" height="24"/><rect x="739.4" y="20.5" width="1.3" height="4.5"/></g><g fill="#333" font-family="Liberation Sans" font-size="15"><text x="78.5" y="19">3</text><text x="208.7" y="19">4</text><text x="338.9" y="19">5</text><text x="469.1" y="19">6</text><text x="599.3" y="19">7</text><text x="729.5" y="19">8</text></g><rect x="424.5" y="2" width="2" height="12" fill="#111"/></svg>
<div class="a" style="left:973px;top:143px;width:1010px;height:1px;background:#a0a0a0;width:768px"></div>
<svg style="left:973px;top:143px" width="25" height="745"><g fill="#8a8a8a"><rect x="20.5" y="7.0" width="4.5" height="1.3"/><rect x="20.5" y="20.0" width="4.5" height="1.3"/><rect x="20.5" y="33.0" width="4.5" height="1.3"/><rect x="20.5" y="46.0" width="4.5" height="1.3"/><rect x="1" y="59.0" width="24" height="1.3"/><rect x="20.5" y="72.0" width="4.5" height="1.3"/><rect x="20.5" y="85.0" width="4.5" height="1.3"/><rect x="20.5" y="98.0" width="4.5" height="1.3"/><rect x="20.5" y="111.0" width="4.5" height="1.3"/><rect x="17" y="124.0" width="8" height="1.3"/><rect x="20.5" y="137.0" width="4.5" height="1.3"/><rect x="20.5" y="150.0" width="4.5" height="1.3"/><rect x="20.5" y="163.0" width="4.5" height="1.3"/><rect x="20.5" y="176.0" width="4.5" height="1.3"/><rect x="1" y="189.0" width="24" height="1.3"/><rect x="20.5" y="202.0" width="4.5" height="1.3"/><rect x="20.5" y="215.0" width="4.5" height="1.3"/><rect x="20.5" y="228.0" width="4.5" height="1.3"/><rect x="20.5" y="241.0" width="4.5" height="1.3"/><rect x="17" y="254.0" width="8" height="1.3"/><rect x="20.5" y="267.0" width="4.5" height="1.3"/><rect x="20.5" y="280.0" width="4.5" height="1.3"/><rect x="20.5" y="293.0" width="4.5" height="1.3"/><rect x="20.5" y="306.0" width="4.5" height="1.3"/><rect x="1" y="319.0" width="24" height="1.3"/><rect x="20.5" y="332.0" width="4.5" height="1.3"/><rect x="20.5" y="345.0" width="4.5" height="1.3"/><rect x="20.5" y="358.0" width="4.5" height="1.3"/><rect x="20.5" y="371.0" width="4.5" height="1.3"/><rect x="17" y="384.0" width="8" height="1.3"/><rect x="20.5" y="397.0" width="4.5" height="1.3"/><rect x="20.5" y="410.0" width="4.5" height="1.3"/><rect x="20.5" y="423.0" width="4.5" height="1.3"/><rect x="20.5" y="436.0" width="4.5" height="1.3"/><rect x="1" y="449.0" width="24" height="1.3"/><rect x="20.5" y="462.0" width="4.5" height="1.3"/><rect x="20.5" y="475.0" width="4.5" height="1.3"/><rect x="20.5" y="488.0" width="4.5" height="1.3"/><rect x="20.5" y="501.0" width="4.5" height="1.3"/><rect x="17" y="514.0" width="8" height="1.3"/><rect x="20.5" y="527.0" width="4.5" height="1.3"/><rect x="20.5" y="540.0" width="4.5" height="1.3"/><rect x="20.5" y="553.0" width="4.5" height="1.3"/><rect x="20.5" y="566.0" width="4.5" height="1.3"/><rect x="1" y="579.0" width="24" height="1.3"/><rect x="20.5" y="592.0" width="4.5" height="1.3"/><rect x="20.5" y="605.0" width="4.5" height="1.3"/><rect x="20.5" y="618.0" width="4.5" height="1.3"/><rect x="20.5" y="631.0" width="4.5" height="1.3"/><rect x="17" y="644.0" width="8" height="1.3"/><rect x="20.5" y="657.0" width="4.5" height="1.3"/><rect x="20.5" y="670.0" width="4.5" height="1.3"/><rect x="20.5" y="683.0" width="4.5" height="1.3"/><rect x="20.5" y="696.0" width="4.5" height="1.3"/><rect x="1" y="709.0" width="24" height="1.3"/><rect x="20.5" y="722.0" width="4.5" height="1.3"/><rect x="20.5" y="735.0" width="4.5" height="1.3"/></g><g fill="#333" font-family="Liberation Sans" font-size="15"><text x="2.5" y="73.6">1</text><text x="2.5" y="203.6">2</text><text x="2.5" y="333.6">3</text><text x="2.5" y="463.6">4</text><text x="2.5" y="593.6">5</text><text x="2.5" y="723.6">6</text></g><rect x="2" y="174" width="13" height="2" fill="#111"/></svg>
<div class="a" style="left:997px;top:143px;width:1px;height:745px;background:#a0a0a0"></div>

<!-- ILLUSTRATION -->
<svg style="left:998px;top:144px;overflow:hidden" width="743" height="743" viewBox="998 144 743 743"><defs><clipPath id="tr"><path d="M1173 887V565C1173 516 1214 479 1262 479H1741V887Z"/></clipPath></defs>
<rect x="998" y="144" width="743" height="743" fill="#f0b955"/>
<path d="M1125 144C1125 195 1158 224 1208 224L1288 224C1318 224 1336 236 1352 252L1352 430L1741 430L1741 144Z" fill="#f7cf78"/>
<path d="M998 422C1006 410 1030 404 1058 404L1112 404L1112 606C1080 608 1030 608 998 604Z" fill="#f7cf78"/>
<circle cx="1772" cy="345" r="245" fill="#f6e8d6"/>
<!-- mountain -->
<path d="M1100 887L1104 405L1126 408L1128 380C1140 370 1150 365 1161 365L1183 368C1196 325 1205 272 1219 267C1225 275 1227 290 1227 300C1245 320 1262 342 1275 343L1293 337C1303 343 1312 345 1323 343L1327 252L1345 203C1355 180 1365 168 1374 168C1390 172 1400 190 1411 202L1444 202L1444 169L1479 182L1489 368C1494 352 1498 347 1506 347C1514 347 1518 350 1522 353L1539 312L1555 302L1576 238L1588 236L1594 242L1607 221L1741 470L1741 887Z" fill="#cb9140"/>
<!-- cactus 2 (behind) -->
<path d="M1114 697H1150V645C1150 636 1156 630 1160 630C1166 630 1172 636 1172 645V887H1114Z" fill="#c98c3d"/>
<!-- cactus 1 -->
<path d="M1065 887V567C1065 553 1076 543 1089 543C1103 543 1114 553 1114 567V887Z" fill="#c4873b"/>
<path d="M1005 582C1005 573 1012 567 1020 567C1029 567 1036 573 1036 582V624H1070V650H1030C1016 650 1005 639 1005 625Z" fill="#c4873b"/>
<path d="M1002 720C1002 710 1010 702 1020 702C1030 702 1038 710 1038 720V760H1070V794H1028C1013 794 1002 783 1002 768Z" fill="#c4873b"/>
<path d="M1114 738H1172V887H1114Z" fill="#cf9645"/>
<path d="M1040 887C1060 876 1100 870 1170 872L1170 887Z" fill="#e3a54b"/>
<!-- trailer roof vent -->
<path d="M1484 454H1642L1655 476H1471Z" fill="#643b22"/>
<!-- trailer body -->
<path d="M1167 887V565C1167 512 1210 473 1262 473H1741V887Z" fill="#6a3f20"/>
<path d="M1173 887V565C1173 516 1214 479 1262 479H1741V887Z" fill="#fce5b2"/>
<g clip-path="url(#tr)"><rect x="1167" y="513" width="574" height="62" fill="#edce94"/></g>
<rect x="1167" y="575" width="574" height="170" fill="#c35b33"/>
<rect x="1167" y="745" width="574" height="52" fill="#edcd94"/>
<rect x="1167" y="797" width="574" height="22" fill="#dbbb7c"/>
<rect x="1167" y="819" width="574" height="43" fill="#c35b33"/>
<rect x="1167" y="862" width="574" height="25" fill="#dbbb7c"/>
<!-- window 1 -->
<rect x="1207" y="603" width="175" height="100" fill="#5c351c"/>
<rect x="1211" y="607" width="167" height="92" fill="#bfa888"/>
<path d="M1211 607H1261L1350 699H1292L1211 619Z" fill="#fdf6de"/>
<path d="M1277 607H1308L1378 679V699H1366Z" fill="#fdf6de"/>
<!-- rounded square -->
<rect x="1204" y="755" width="54" height="54" rx="9" fill="none" stroke="#9c7146" stroke-width="2.2"/>
<!-- door -->
<path d="M1417 887V552C1417 539 1428 529 1441 529H1538C1551 529 1562 539 1562 552V887Z" fill="#6a3f20"/>
<path d="M1424 887V554C1424 543 1432 535 1443 535H1537C1548 535 1556 543 1556 554V887Z" fill="#c35b33"/>
<rect x="1424" y="797" width="132" height="90" fill="#b3532c"/>
<circle cx="1449" cy="712.5" r="10" fill="#5b3a24"/>
<rect x="1449" y="709.5" width="41" height="6.5" rx="3" fill="#5b3a24"/>
<!-- small rect -->
<rect x="1633" y="530" width="67" height="29" fill="none" stroke="#a88356" stroke-width="1.6"/>
<!-- awning + window 2 -->
<rect x="1610" y="591" width="119" height="12" fill="#efd09a"/>
<rect x="1620" y="605" width="99" height="96" fill="#643b22"/>
<rect x="1626" y="611" width="87" height="84" fill="#bfa888"/>
<path d="M1626 611H1713V684Z" fill="#fdf6de"/>
<!-- vents -->
<rect x="1570" y="711" width="86" height="30" fill="#eac990"/>
<rect x="1575" y="716" width="76" height="5" fill="#1d1d1f"/><rect x="1575" y="724" width="76" height="5" fill="#1d1d1f"/><rect x="1575" y="732" width="76" height="5" fill="#1d1d1f"/>
<rect x="1570" y="785" width="86" height="30" fill="#d9a95f"/>
<rect x="1575" y="790" width="76" height="5" fill="#1d1d1f"/><rect x="1575" y="798" width="76" height="5" fill="#1d1d1f"/><rect x="1575" y="806" width="76" height="5" fill="#1d1d1f"/>
<!-- bottom bits -->
<path d="M1166 843C1168 860 1174 875 1181 887H1166Z" fill="#d89d44"/>
<path d="M1209 888C1210 881 1214 878 1220 878C1226 878 1230 881 1231 888Z" fill="#c35b33" stroke="#6a3f20" stroke-width="1.5"/>
<rect x="1276" y="882" width="106" height="8" rx="3" fill="#fbe3b0"/>
<!-- PEN PATH -->
<path d="M1080 874L1106 405L1126 408L1128 380C1140 370 1150 365 1161 365L1183 368C1196 325 1205 272 1219 267C1225 275 1227 290 1227 300C1245 320 1262 342 1275 343C1282 341 1288 337 1293 337C1303 343 1312 347 1323 343L1326.5 267" fill="none" stroke="#3d78bd" stroke-width="2.2"/>
<path d="M1326.5 267L1333 284" stroke="#3d78bd" stroke-width="1.6"/>
<g fill="#fff" stroke="#3d78bd" stroke-width="1.6">
<rect x="1075.5" y="869.5" width="9" height="9"/>
<rect x="1101.5" y="400.5" width="9" height="9"/>
<rect x="1121.5" y="403.5" width="9" height="9"/>
<rect x="1123.5" y="375.5" width="9" height="9"/>
<rect x="1156.5" y="360.5" width="9" height="9"/>
<rect x="1178.5" y="363.5" width="9" height="9"/>
<rect x="1214.5" y="262.5" width="9" height="9"/>
<rect x="1222.5" y="295.5" width="9" height="9"/>
<rect x="1270.5" y="338.5" width="9" height="9"/>
<rect x="1288.5" y="332.5" width="9" height="9"/>
<rect x="1318.5" y="338.5" width="9" height="9"/>
<circle cx="1333" cy="284" r="4.5"/>
</g>
<rect x="1321.5" y="262" width="10" height="10" fill="#1e78e6"/>
</svg>

<!-- float scrollbars/status -->
<div class="a" style="left:1741px;top:119px;width:25px;height:769px;background:#e6e6e6"></div>
<svg style="left:1749px;top:128px" width="12" height="8"><path d="M1 6.5l5-5 5 5" fill="none" stroke="#aaa" stroke-width="1.2"/></svg>
<div class="a" style="left:1745px;top:175px;width:17px;height:323px;background:#c3c3c3;border-radius:3px"></div>
<svg style="left:1749px;top:867px" width="12" height="8"><path d="M1 1.5l5 5 5-5" fill="none" stroke="#aaa" stroke-width="1.2"/></svg>
<div class="a" style="left:973px;top:887px;width:793px;height:25px;background:#e9e9e9"></div>
<div class="a" style="left:973px;top:888px;width:72px;height:23px;background:#fdfdfd"></div>
<div class="t" style="left:980px;top:891px;font-size:16px;color:#222">165.3%</div>
<div class="a" style="left:1045px;top:888px;width:275px;height:23px;background:#ececec"></div>
<div class="t" style="left:1107px;top:892px;font-size:16px;color:#666">文档:3.71M/5.36M</div>
<svg style="left:1304px;top:893px" width="8" height="14"><path d="M1.5 1l5 6-5 6" fill="none" stroke="#444" stroke-width="1.2"/></svg>
<div class="a" style="left:1320px;top:888px;width:421px;height:23px;background:#e3e3e3"></div>
<svg style="left:1332px;top:894px" width="8" height="12"><path d="M6 1L1.5 6 6 11" fill="none" stroke="#aaa" stroke-width="1.2"/></svg>
<div class="a" style="left:1401px;top:891px;width:128px;height:17px;background:#c3c3c3;border-radius:3px"></div>
<svg style="left:1722px;top:894px" width="8" height="12"><path d="M2 1l4.5 5L2 11" fill="none" stroke="#aaa" stroke-width="1.2"/></svg>
<div class="a" style="left:1741px;top:888px;width:25px;height:23px;background:#efefef"></div>
<!-- tooltip -->
<div class="a" style="left:1337px;top:136px;width:347px;height:29px;background:#ffffff;border:1px solid #7a7a7a;box-shadow:2px 2px 2px rgba(0,0,0,.25)"></div>
<div class="t" style="left:1343px;top:141px;font-size:18.8px;color:#4a4a4a">未标题-1 @ 182% (1936949, RGB/8#) *</div>

<!-- WATERMARK -->
<div class="t" style="left:1534px;top:995px;font-size:48px;font-weight:500;color:#fff;text-shadow:1px 1px 0 #000,2px 2px 0 #000,3px 3px 0 #000,3.5px 3.5px 1px #000;letter-spacing:0.2px;-webkit-text-stroke:0.6px #fff">头条 @上宫媒体</div>
</body></html>
